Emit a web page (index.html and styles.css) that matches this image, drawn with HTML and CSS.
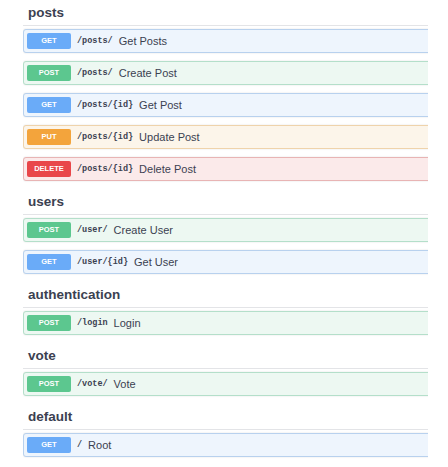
FILE: index.html
```html
<!DOCTYPE html>
<html>
<head>
<meta charset="utf-8">
<link rel="stylesheet" href="styles.css">
</head>
<body>
<div class="wrap">
  <section class="tag">
    <h3 class="tag-title">posts</h3>
    <div class="op get"><span class="method">GET</span><span class="path">/posts/</span><span class="summary">Get Posts</span></div>
    <div class="op post"><span class="method">POST</span><span class="path">/posts/</span><span class="summary">Create Post</span></div>
    <div class="op get"><span class="method">GET</span><span class="path">/posts/{id}</span><span class="summary">Get Post</span></div>
    <div class="op put"><span class="method">PUT</span><span class="path">/posts/{id}</span><span class="summary">Update Post</span></div>
    <div class="op delete"><span class="method">DELETE</span><span class="path">/posts/{id}</span><span class="summary">Delete Post</span></div>
  </section>
  <section class="tag">
    <h3 class="tag-title">users</h3>
    <div class="op post"><span class="method">POST</span><span class="path">/user/</span><span class="summary">Create User</span></div>
    <div class="op get"><span class="method">GET</span><span class="path">/user/{id}</span><span class="summary">Get User</span></div>
  </section>
  <section class="tag">
    <h3 class="tag-title">authentication</h3>
    <div class="op post"><span class="method">POST</span><span class="path">/login</span><span class="summary">Login</span></div>
  </section>
  <section class="tag">
    <h3 class="tag-title">vote</h3>
    <div class="op post"><span class="method">POST</span><span class="path">/vote/</span><span class="summary">Vote</span></div>
  </section>
  <section class="tag tag-last">
    <h3 class="tag-title">default</h3>
    <div class="op get"><span class="method">GET</span><span class="path">/</span><span class="summary">Root</span></div>
  </section>
</div>
</body>
</html>
```
FILE: styles.css
```css
html, body {
  margin: 0;
  padding: 0;
  background: #ffffff;
}
body {
  font-family: "Liberation Sans", Arial, sans-serif;
  color: #3b4151;
}
.wrap {
  margin-left: 23px;
  width: 405px;
  overflow: hidden;
  padding-bottom: 4px;
}
.tag-last {
  margin-top: 2px;
}
.tag-title {
  margin: 0 0 3px 0;
  height: 25px;
  border-bottom: 1px solid #e3e4e7;
  padding-left: 5px;
  font-size: 13.5px;
  font-weight: bold;
  line-height: 25px;
  color: #3b4151;
  margin-right: -10px;
}
.op {
  display: flex;
  align-items: center;
  height: 16px;
  padding: 3px;
  margin-bottom: 8px;
  margin-right: -10px;
  border: 1px solid;
  border-radius: 3px;
  box-shadow: 0 0 2px rgba(0, 0, 0, 0.12);
}
.method {
  width: 44px;
  height: 16px;
  flex: none;
  border-radius: 2px;
  color: #ffffff;
  font-size: 7.5px;
  font-weight: bold;
  line-height: 16px;
  text-align: center;
}
.path {
  margin-left: 6px;
  font-family: "Liberation Mono", "Courier New", monospace;
  font-weight: bold;
  font-size: 8.5px;
  color: #3b4151;
}
.summary {
  margin-left: 6px;
  font-size: 11px;
  color: #3b4151;
}
.get { background: #eef5fd; border-color: #b8d1ee; }
.get .method { background: #6aabf8; }
.post { background: #edf8f2; border-color: #b4dfca; }
.post .method { background: #5cc78f; }
.put { background: #fcf5ea; border-color: #efd3ab; }
.put .method { background: #f3a43c; }
.delete { background: #fbeaea; border-color: #e8b4b4; }
.delete .method { background: #e9474a; }
```
